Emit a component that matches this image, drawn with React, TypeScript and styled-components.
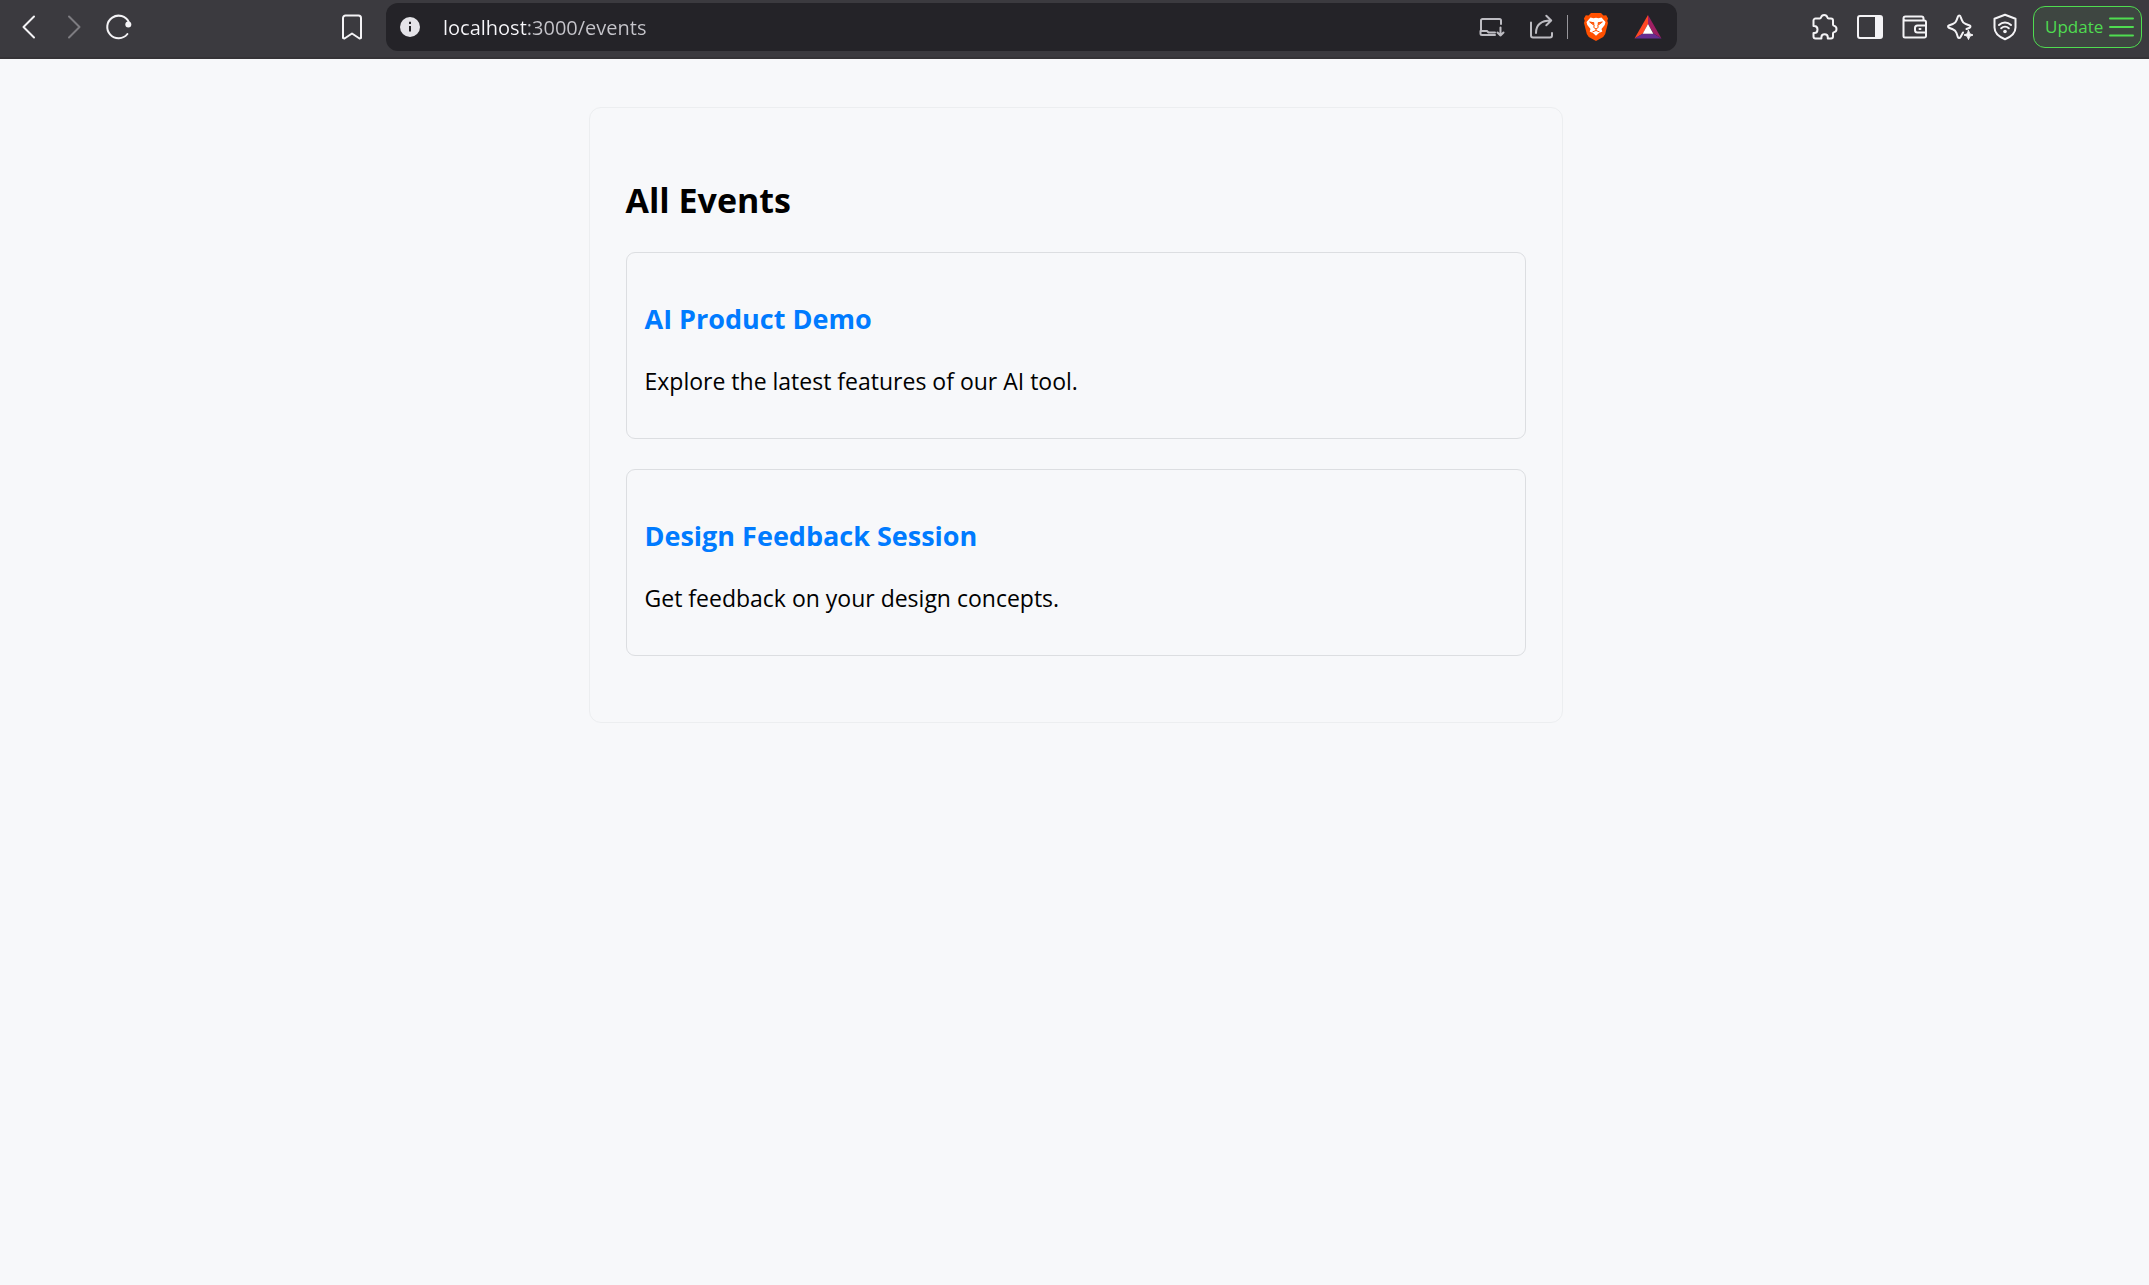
import React from "react";
import styled, { createGlobalStyle } from "styled-components";

const GlobalStyle = createGlobalStyle`
  * { box-sizing: border-box; }
  body {
    margin: 0;
    background: #f7f8fa;
    color: #000;
    font-family: "Segoe UI", "Open Sans", "Noto Sans", sans-serif;
  }
`;

const Toolbar = styled.header`
  display: flex;
  align-items: center;
  height: 59px;
  padding-bottom: 3px;
  background: #3b3a3f;
  border-bottom: 2px solid #353337;
`;

const NavGroup = styled.nav`
  display: flex;
  align-items: center;
  width: 386px;
  flex: none;
  padding: 0 16px 0 11px;
`;

const IconButton = styled.button<{ $width?: number }>`
  display: flex;
  align-items: center;
  justify-content: center;
  flex: none;
  width: ${(p) => p.$width ?? 36}px;
  height: 36px;
  margin: 0;
  padding: 0;
  border: 0;
  background: none;
  color: inherit;
  cursor: pointer;

  svg { display: block; }
`;

const BackForward = styled.div`
  display: flex;
  gap: 9px;
  color: #f4f3f6;

  button:disabled { color: #7d7c81; cursor: default; }
`;

const BookmarkSlot = styled.div`
  margin-left: auto;
  color: #f4f3f6;
`;

const AddressBar = styled.form`
  display: flex;
  align-items: center;
  flex: 1;
  min-width: 0;
  height: 48px;
  padding: 0 3px 0 6px;
  border-radius: 12px;
  background: #242328;
  color: #bdbcc2;
`;

const UrlInput = styled.input`
  flex: 1;
  min-width: 0;
  height: 36px;
  margin-left: 15px;
  padding: 0;
  border: 0;
  outline: 0;
  font-family: inherit;
  font-size: 20px;
  color: transparent;
  background: linear-gradient(to right, #f8f7fb 84px, #c6c5cb 84px);
  background-clip: text;
  -webkit-background-clip: text;
`;

const PageActions = styled.div`
  display: flex;
  align-items: center;
`;

const Separator = styled.span`
  width: 1px;
  height: 24px;
  margin-right: 2px;
  background: #97969b;
`;

const Actions = styled.div`
  display: flex;
  align-items: center;
  justify-content: flex-end;
  flex: none;
  width: 472px;
  padding-right: 7px;
  color: #f4f3f6;
`;

const UpdateButton = styled.button`
  display: flex;
  align-items: center;
  justify-content: space-between;
  width: 109px;
  height: 42px;
  margin-left: 6px;
  padding: 0 6px 0 11px;
  border: 1px solid #4fdc50;
  border-radius: 12px;
  background: #3e4641;
  color: #4fdc50;
  font-family: inherit;
  font-size: 17px;
  line-height: 24px;
  cursor: pointer;
`;

const Main = styled.main`
  padding: 48px 22px 24px 24px;
`;

const Panel = styled.section`
  max-width: 974px;
  margin: 0 auto;
  padding: 68px 36px 66px;
  border: 1px solid #eceef0;
  border-radius: 12px;
`;

const PageTitle = styled.h1`
  margin: 0 0 28px;
  font-size: 34px;
  line-height: 48px;
  font-weight: 700;
`;

const EventList = styled.ul`
  display: flex;
  flex-direction: column;
  gap: 30px;
  margin: 0;
  padding: 0;
  list-style: none;
`;

const EventCard = styled.li`
  padding: 47px 18px 39px;
  border: 1px solid #dcdee1;
  border-radius: 9px;
`;

const EventTitle = styled.h2`
  margin: 0 0 25px;
  font-size: 27px;
  line-height: 38px;
  font-weight: 700;
`;

const EventLink = styled.a`
  color: #007bff;
  text-decoration: none;
`;

const EventText = styled.p`
  margin: 0;
  font-size: 23px;
  line-height: 36px;
`;

type DrawingProps = { w?: number; h?: number; sw?: number; children: React.ReactNode };

const Drawing = ({ w = 28, h = 28, sw = 2, children }: DrawingProps) => (
  <svg
    width={w}
    height={h}
    viewBox={`0 0 ${w} ${h}`}
    fill="none"
    stroke="currentColor"
    strokeWidth={sw}
    strokeLinecap="round"
    strokeLinejoin="round"
    aria-hidden="true"
  >
    {children}
  </svg>
);

const BackIcon = () => (
  <Drawing><path d="M19 3.500 8.500 14 19 24.500" /></Drawing>
);
const ForwardIcon = () => (
  <Drawing><path d="M9 3.500 19.500 14 9 24.500" /></Drawing>
);
const ReloadIcon = () => (
  <Drawing>
    <path d="M22.400 21A11.300 11.300 0 1 1 23.800 9.200" />
    <circle cx="23.300" cy="11.400" r="3" fill="currentColor" stroke="none" />
  </Drawing>
);
const BookmarkIcon = () => (
  <Drawing>
    <path d="M7.500 2.500h13A2.500 2.500 0 0 1 23 5v20l-1.500.5L14 20.500 6.500 25.500 5 25V5a2.500 2.500 0 0 1 2.500-2.500Z" />
  </Drawing>
);
const InfoIcon = () => (
  <Drawing>
    <circle cx="14" cy="14" r="10" fill="#e4e3e8" stroke="none" />
    <path d="M14 13v5.500" stroke="#242328" strokeLinecap="butt" />
    <path d="M14 8.800v2.200" stroke="#242328" strokeLinecap="butt" />
  </Drawing>
);
const InstallIcon = () => (
  <Drawing>
    <path d="M3 18V7.500A1.500 1.500 0 0 1 4.500 6h17A1.500 1.500 0 0 1 23 7.500V11" />
    <path d="M17 22H4a1.500 1.500 0 0 1-1.500-1.500V18h6.500l1.500 1.500H17" />
    <path d="M22.500 14.500v8M19.500 19.500l3 3 3-3" />
  </Drawing>
);
const ShareIcon = () => (
  <Drawing>
    <path d="M3 9.500V22.500A2 2 0 0 0 5 24.500H22A2 2 0 0 0 24 22.500V20" />
    <path d="M8 20c0-8 5-12.500 15-12.500M18.300 2.800l4.900 4.700-4.900 4.700" />
  </Drawing>
);
const LionIcon = () => (
  <Drawing w={28} h={30}>
    <path
      d="M9 1h10l2.500 2.500 2.700-.3 1.900 3.300-.8 2.200.7 2.300-2.800 11-2 3L14 29l-7.200-4-2-3L2 11l.7-2.300-.8-2.200 1.900-3.300 2.700.3Z"
      fill="#ff5000"
      stroke="none"
    />
    <path
      d="m8.500 5.500 3 .8L14 5.800l2.500.5 3-.8L23.500 10l-.8 3-3.200 4 .8 2.500-3.300 1.500L14 23.700 11 21l-3.300-1.500.8-2.500-3.200-4-.8-3Z"
      fill="#fff"
      stroke="none"
    />
    <path d="M8 10l4 .8-.5 1.700ZM20 10l-4 .8.5 1.700Z" fill="#ff5000" stroke="#ff5000" strokeWidth="1" />
    <path
      d="M12.200 13 11.800 15.500 14 17l2.200-1.500-.4-2.500M14 17v1.500M10.800 19.800 14 18.500l3.200 1.300"
      stroke="#ff5000"
      strokeWidth="1"
    />
  </Drawing>
);
const TriangleIcon = () => (
  <Drawing>
    <path d="M14 2 .5 25.500 9 20.500 14 11Z" fill="#ff4724" stroke="none" />
    <path d="M14 2 27.500 25.500 19.500 20.500 14 11Z" fill="#9e1f63" stroke="none" />
    <path d="M.5 25.500h27L19.500 20.500H9Z" fill="#662d91" stroke="none" />
    <path d="M14 11 8.700 20.800h10.600Z" fill="#fff" stroke="none" />
  </Drawing>
);
const PuzzleIcon = () => (
  <Drawing>
    <path d="M4.500 5.500h4.200c.9 0 1.200-.5 1.400-1.200C10.500 2.800 11.700 2 13.200 2s2.700.8 3.100 2.300c.2.700.5 1.200 1.400 1.200H20a2 2 0 0 1 2 2v4c0 .9.500 1.200 1.200 1.400 1.500.4 2.300 1.600 2.300 3.100s-.8 2.700-2.300 3.100c-.7.2-1.200.5-1.200 1.400v3a2 2 0 0 1-2 2h-3.200v-1.300c0-1.900-1.300-3-3.200-3s-3.200 1.100-3.200 3v1.300H4.500a2 2 0 0 1-2-2V20h.8c2 0 3.200-1.500 3.200-3.500S5.300 13 3.300 13h-.8V7.500a2 2 0 0 1 2-2Z" />
  </Drawing>
);
const SidePanelIcon = () => (
  <Drawing>
    <rect x="2" y="3" width="24" height="22" rx="2" />
    <path d="M19 3h5.500A1.500 1.500 0 0 1 26 4.500v19a1.500 1.500 0 0 1-1.500 1.500H19Z" fill="currentColor" stroke="none" />
  </Drawing>
);
const WalletIcon = () => (
  <Drawing>
    <path d="M22.500 7.500V5.500a2 2 0 0 0-2-2H4.500a2 2 0 0 0 0 4H23.500A1.500 1.500 0 0 1 25 9V23a1.500 1.500 0 0 1-1.500 1.500H4A1.500 1.500 0 0 1 2.500 23V5.500" />
    <path d="M25 12.500h-8.500A2.500 2.500 0 0 0 14 15v2a2.500 2.500 0 0 0 2.500 2.500H25M18.500 16h1" />
  </Drawing>
);
const SparkleIcon = () => (
  <Drawing>
    <path d="M17 19.500 14.400 24.200c-.5 1.200-2 1.200-2.500 0L10.500 20c-.7-2-1.700-3-3.700-3.700L2.800 14.700c-1-.4-1-1.800 0-2.200L6.800 11c2-.7 3-1.700 3.700-3.700L12 3.300c.5-1.200 2-1.200 2.400 0L16 7.300c.7 2 1.700 3 3.700 3.700l4 1.500c1 .4 1 1.800 0 2.200L20.500 16" />
    <path d="m22.500 17.500 1.300 3.200L27 22l-3.200 1.300-1.300 3.200-1.300-3.200L18 22l3.200-1.300Z" fill="currentColor" strokeWidth="1" />
  </Drawing>
);
const ShieldIcon = () => (
  <Drawing>
    <path d="m14 1.800 10.500 4v8.700c0 5-4.500 9.300-10.500 11.700C8 23.800 3.500 19.500 3.500 14.500V5.800Z" />
    <path d="M8 12c3.500-3.300 8.500-3.300 12 0M10.200 15.300c2.200-2 5.400-2 7.600 0" />
    <circle cx="14" cy="18.500" r="1.800" fill="currentColor" stroke="none" />
  </Drawing>
);
const MenuIcon = () => (
  <Drawing w={26} h={24}><path d="M1 3.500h23M1 12h23M1 20.500h23" /></Drawing>
);

const actions = [
  { label: "Extensions", icon: <PuzzleIcon /> },
  { label: "Sidebar", icon: <SidePanelIcon /> },
  { label: "Wallet", icon: <WalletIcon /> },
  { label: "Assistant", icon: <SparkleIcon /> },
  { label: "VPN", icon: <ShieldIcon /> },
];

const events = [
  { id: 1, title: "AI Product Demo", text: "Explore the latest features of our AI tool." },
  { id: 2, title: "Design Feedback Session", text: "Get feedback on your design concepts." },
];

export default function App() {
  return (
    <>
      <GlobalStyle />
      <Toolbar>
        <NavGroup aria-label="Browser navigation">
          <BackForward>
            <IconButton type="button" aria-label="Back"><BackIcon /></IconButton>
            <IconButton type="button" aria-label="Forward" disabled><ForwardIcon /></IconButton>
            <IconButton type="button" aria-label="Reload"><ReloadIcon /></IconButton>
          </BackForward>
          <BookmarkSlot>
            <IconButton type="button" aria-label="Bookmark this page"><BookmarkIcon /></IconButton>
          </BookmarkSlot>
        </NavGroup>

        <AddressBar onSubmit={(e) => e.preventDefault()}>
          <IconButton type="button" aria-label="Site information"><InfoIcon /></IconButton>
          <UrlInput aria-label="Address" defaultValue="localhost:3000/events" spellCheck={false} />
          <PageActions>
            <IconButton type="button" aria-label="Install" $width={50}><InstallIcon /></IconButton>
            <IconButton type="button" aria-label="Share" $width={50}><ShareIcon /></IconButton>
            <Separator />
            <IconButton type="button" aria-label="Shields" $width={52}><LionIcon /></IconButton>
            <IconButton type="button" aria-label="Rewards" $width={52}><TriangleIcon /></IconButton>
          </PageActions>
        </AddressBar>

        <Actions>
          {actions.map((a) => (
            <IconButton key={a.label} type="button" aria-label={a.label} $width={45}>{a.icon}</IconButton>
          ))}
          <UpdateButton type="button">
            Update
            <MenuIcon />
          </UpdateButton>
        </Actions>
      </Toolbar>

      <Main>
        <Panel>
          <PageTitle>All Events</PageTitle>
          <EventList>
            {events.map((e) => (
              <EventCard key={e.id}>
                <EventTitle><EventLink href={`/events/${e.id}`}>{e.title}</EventLink></EventTitle>
                <EventText>{e.text}</EventText>
              </EventCard>
            ))}
          </EventList>
        </Panel>
      </Main>
    </>
  );
}
